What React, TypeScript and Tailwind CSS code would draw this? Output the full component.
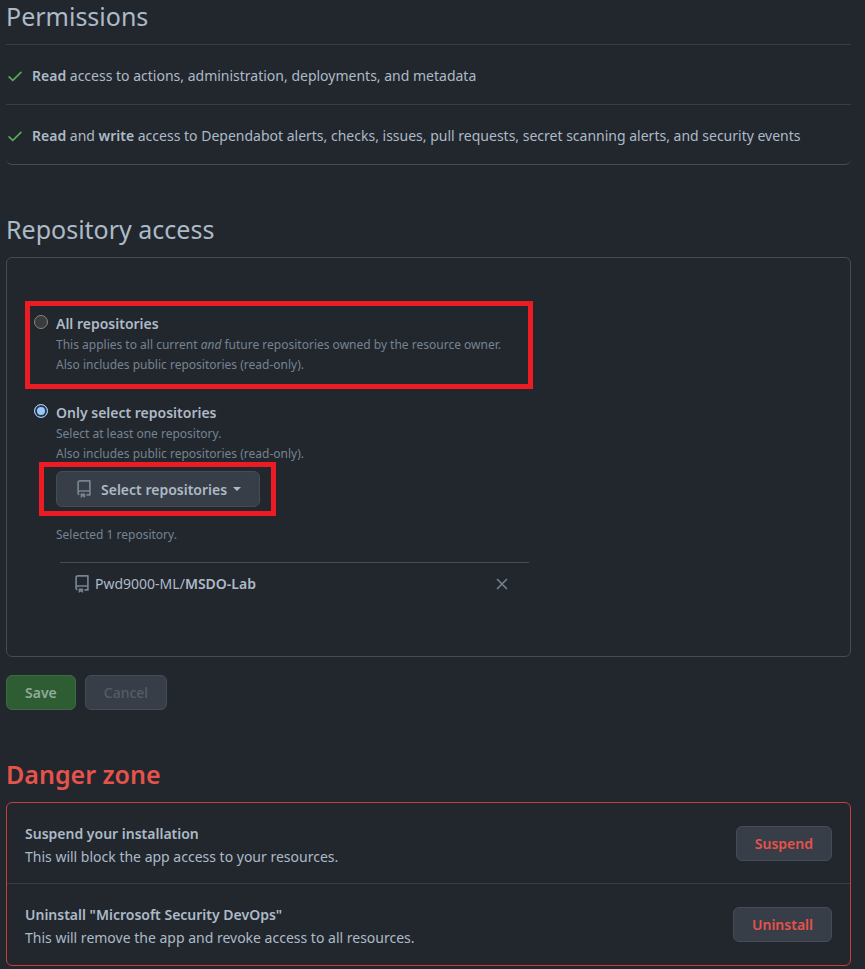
import type { ReactNode } from "react";

function CheckIcon() {
  return (
    <svg viewBox="0 0 16 16" className="size-[18px] shrink-0 fill-[#57ab5a]" aria-hidden="true">
      <path d="M13.78 4.22a.75.75 0 0 1 0 1.06l-7.25 7.25a.75.75 0 0 1-1.06 0L2.22 9.28a.75.75 0 0 1 1.06-1.06L6 10.94l6.72-6.72a.75.75 0 0 1 1.06 0Z" />
    </svg>
  );
}

function RepoIcon() {
  return (
    <svg viewBox="0 0 16 16" className="size-[18px] shrink-0 fill-[#768390]" aria-hidden="true">
      <path
        fillRule="evenodd"
        d="M2 2.5A2.5 2.5 0 0 1 4.5 0h8.75a.75.75 0 0 1 .75.75v12.5a.75.75 0 0 1-.75.75h-2.5a.75.75 0 0 1 0-1.5h1.75v-2h-8a1 1 0 0 0-.714 1.7.75.75 0 0 1-1.072 1.05A2.495 2.495 0 0 1 2 11.5v-9Zm10.5-1V9h-8c-.356 0-.694.074-1 .208V2.5a1 1 0 0 1 1-1h8ZM5 12.25v3.25a.25.25 0 0 0 .4.2l1.45-1.087a.25.25 0 0 1 .3 0L8.6 15.7a.25.25 0 0 0 .4-.2v-3.25a.25.25 0 0 0-.25-.25h-3.5a.25.25 0 0 0-.25.25Z"
      />
    </svg>
  );
}

function Heading({ children }: { children: ReactNode }) {
  return <h2 className="mb-3 text-[25px] leading-8">{children}</h2>;
}

function Permission({ children }: { children: ReactNode }) {
  return (
    <li className="flex items-center gap-2 border-t border-[#373e47] pt-[19px] pb-[17px]">
      <CheckIcon />
      <span>{children}</span>
    </li>
  );
}

function AccessOption({
  id,
  title,
  checked,
  children,
}: {
  id: string;
  title: string;
  checked?: boolean;
  children: ReactNode;
}) {
  return (
    <div className="flex gap-2">
      <input
        type="radio"
        name="access"
        id={id}
        defaultChecked={checked}
        className="mt-[2px] size-[14px] shrink-0 appearance-none rounded-full border border-[#858585] bg-[#3b3b3b] checked:border-[#99c8ff] checked:bg-[#99c8ff] checked:shadow-[inset_0_0_0_2px_#2b3440]"
      />
      <div>
        <label htmlFor={id} className="block leading-[22px] font-semibold">
          {title}
        </label>
        <p className="text-[12px] leading-5 text-[#768390]">{children}</p>
      </div>
    </div>
  );
}

function DangerRow({ title, text, action }: { title: string; text: string; action: string }) {
  return (
    <div className="flex min-h-[81px] items-center justify-between px-[18px]">
      <div className="pt-[3px]">
        <h3 className="font-semibold">{title}</h3>
        <p>{text}</p>
      </div>
      <button
        type="button"
        className="h-[35px] rounded-md border border-[#444c56] bg-[#373e47] px-[18px] font-semibold text-[#e5534b]"
      >
        {action}
      </button>
    </div>
  );
}

export default function App() {
  return (
    <main className="min-h-screen bg-[#22272e] pr-[14px] pl-[6px] font-['Noto_Sans',sans-serif] text-[14px] leading-[23px] text-[#adbac7]">
      <section>
        <Heading>Permissions</Heading>
        <ul className="rounded-b-md border-b border-[#444c56]">
          <Permission>
            <b className="font-semibold">Read</b> access to actions, administration, deployments, and metadata
          </Permission>
          <Permission>
            <b className="font-semibold">Read</b> and <b className="font-semibold">write</b> access to Dependabot
            alerts, checks, issues, pull requests, secret scanning alerts, and security events
          </Permission>
        </ul>
      </section>

      <form className="mt-12" onSubmit={(e) => e.preventDefault()}>
        <Heading>Repository access</Heading>
        <div className="rounded-md border border-[#444c56] px-[18px] pt-[43px] pb-[61px]">
          <div className="w-fit border-5 border-[#ed1c24] pt-[7px] pr-[27px] pb-[9px] pl-1">
            <AccessOption id="all" title="All repositories">
              This applies to all current <em>and</em> future repositories owned by the resource owner.
              <br />
              Also includes public repositories (read-only).
            </AccessOption>
          </div>
          <div className="mt-[13px] pl-[9px]">
            <AccessOption id="selected" title="Only select repositories" checked>
              Select at least one repository.
              <br />
              Also includes public repositories (read-only).
            </AccessOption>
          </div>

          <div className="-mt-[2px] ml-[14px] w-fit border-5 border-[#ed1c24] py-1 pr-[11px] pl-3">
            <button
              type="button"
              className="flex h-9 items-center rounded-md border border-[#444c56] bg-[#373e47] px-[18px] font-semibold"
            >
              <RepoIcon />
              <span className="ml-2">Select repositories</span>
              <span className="ml-[6px] border-x-4 border-t-4 border-x-transparent border-t-[#adbac7]" />
            </button>
          </div>
          <p className="mt-[9px] ml-[31px] text-[12px] leading-5 text-[#768390]">Selected 1 repository.</p>

          <div className="mt-[17px] ml-[35px] flex max-w-[469px] items-center border-t border-[#444c56] pt-[9px] pr-5 pl-[13px]">
            <RepoIcon />
            <span className="ml-1">
              Pwd9000-ML/<b className="font-semibold">MSDO-Lab</b>
            </span>
            <button type="button" aria-label="Remove repository" className="ml-auto">
              <svg viewBox="0 0 14 14" className="size-[14px] stroke-[#768390] stroke-[1.5]" aria-hidden="true">
                <path d="M2 2l10 10M12 2L2 12" />
              </svg>
            </button>
          </div>
        </div>

        <div className="mt-[18px] flex gap-[9px]">
          <button
            type="submit"
            className="h-[35px] rounded-md border border-[#3b6b42] bg-[#2e5d34] px-[18px] font-semibold text-[#8fab9b]"
          >
            Save
          </button>
          <button
            type="button"
            className="h-[35px] rounded-md border border-[#444c56] bg-[#373e47] px-[18px] font-medium text-[#545d68]"
          >
            Cancel
          </button>
        </div>
      </form>

      <section className="mt-12">
        <h2 className="mb-3 text-[25px] leading-8 font-semibold text-[#e5534b]">Danger zone</h2>
        <div className="divide-y divide-[#373e47] rounded-md border border-[#c93c37]">
          <DangerRow
            title="Suspend your installation"
            text="This will block the app access to your resources."
            action="Suspend"
          />
          <DangerRow
            title={'Uninstall "Microsoft Security DevOps"'}
            text="This will remove the app and revoke access to all resources."
            action="Uninstall"
          />
        </div>
      </section>
    </main>
  );
}
